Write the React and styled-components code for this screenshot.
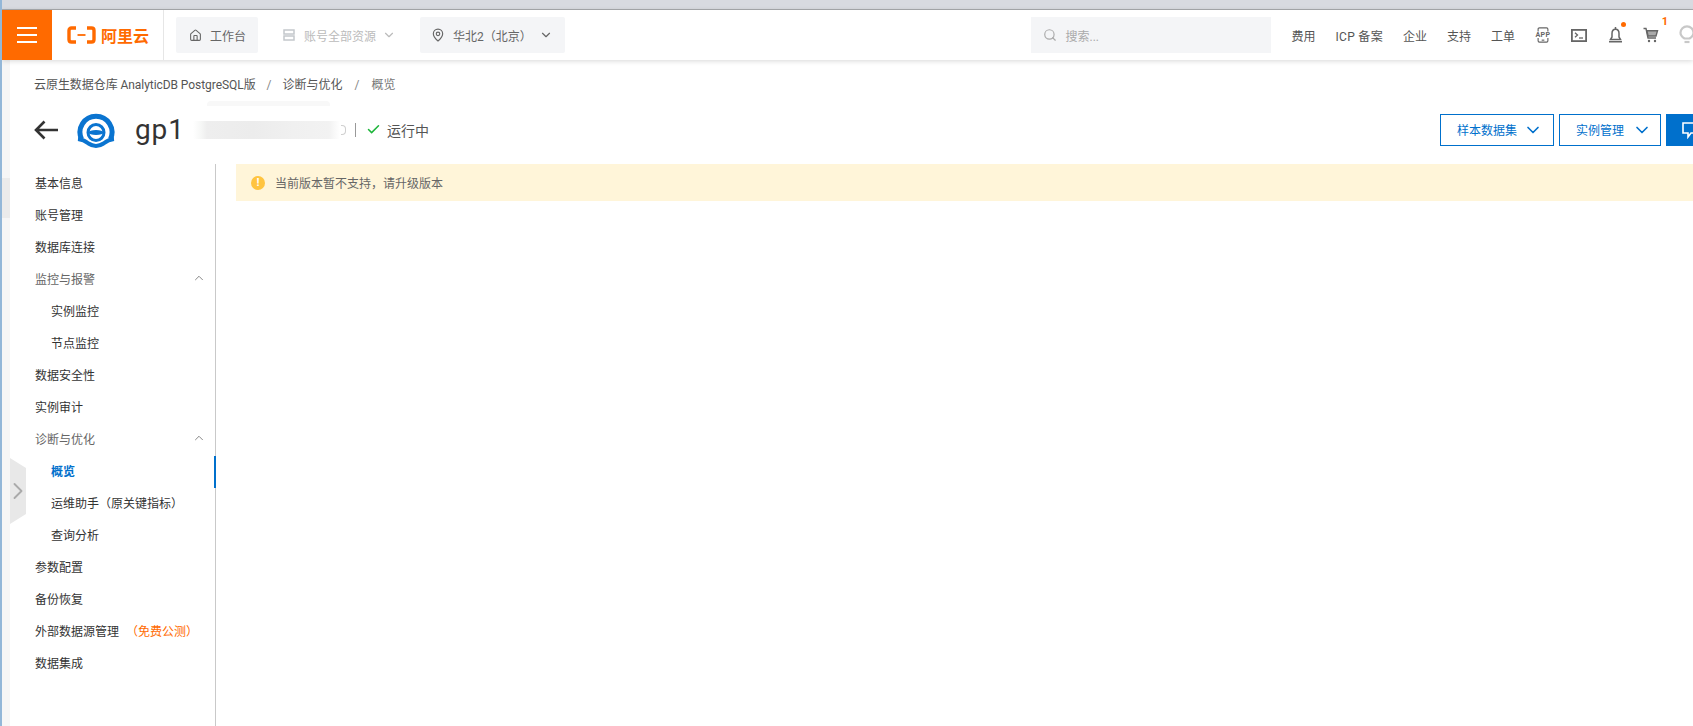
import React from "react";
import styled, { createGlobalStyle } from "styled-components";
import { ChevronDown, ChevronUp, ChevronRight, Home, MapPin, Search, Check } from "lucide-react";

const Global = createGlobalStyle`
  html, body { margin: 0; padding: 0; width: 100%; height: 726px; overflow: hidden; background: #fff; }
  * { box-sizing: border-box; }
  body { font-family: "Roboto", "Noto Sans CJK SC", "Noto Sans", sans-serif; font-size: 12px; color: #333; }
`;

const Page = styled.div`
  width: 1693px; height: 726px; display: flex; flex-direction: column; overflow: hidden; position: relative;
  border-left: 2px solid #93b7d8;
`;
const BrowserStrip = styled.div`
  height: 10px; flex: none; margin-left: -2px; background: #d8dae0; border-bottom: 1px solid #a9abae;
`;
const Header = styled.header`
  height: 50px; flex: none; display: flex; align-items: center; background: #fff;
  box-shadow: 0 1px 5px rgba(0,0,0,.16); position: relative; z-index: 2;
`;
const Burger = styled.div`
  width: 50px; height: 50px; background: #ff6a00; display: flex; flex-direction: column; justify-content: center; align-items: center; gap: 5px;
  span { display: block; width: 20px; height: 2px; background: #fff; }
`;
const Brand = styled.div`
  width: 112px; height: 50px; display: flex; align-items: center; padding-left: 15px; gap: 5px;
  border-right: 1px solid #e6e6e6; color: #ff6a00; font-size: 16px; font-weight: 700;
`;
const NavLeft = styled.div`display: flex; align-items: center; padding-left: 12px;`;
const Pill = styled.div`
  height: 36px; display: flex; align-items: center; border-radius: 2px; color: ${p => (p.$muted ? "#bbb" : "#666")};
  background: ${p => (p.$muted ? "transparent" : "#f4f5f7")};
  width: ${p => p.$w}px; margin-right: ${p => p.$mr || 0}px; padding-left: ${p => p.$pl}px; gap: ${p => p.$gap || 8}px;
`;
const PillChevron = styled.span`display: flex; margin-left: ${p => p.$ml}px;`;
const SearchBox = styled.div`
  width: 240px; height: 36px; margin-left: auto; background: #f4f5f7; display: flex; align-items: center; padding-left: 12px; gap: 9px; color: #aaa;
`;
const TopLinks = styled.div`display: flex; align-items: center; margin-left: 21px; gap: 20px; color: #555;`;
const IcpLink = styled.span`letter-spacing: .3px;`;
const IconStrip = styled.div`display: flex; align-items: center; width: 158px; margin-left: 20px; gap: 20px; flex: none; color: #666;`;
const IconSlot = styled.span`
  position: relative; display: flex; width: 16px; justify-content: center; flex: none;
`;
const Dot = styled.i`position: absolute; top: -5px; right: -3px; width: 5px; height: 5px; border-radius: 50%; background: #ff6a00;`;
const Count = styled.i`position: absolute; top: -11px; right: -9px; font: 700 11px/12px "Roboto", sans-serif; color: #ff6a00;`;

const Main = styled.div`flex: 1; display: flex; flex-direction: column; padding-left: 8px; position: relative; min-height: 0; background: #fff;`;
const Gutter = styled.div`
  position: absolute; left: 0; top: 0; bottom: 0; width: 8px; background: #f6f6f6;
  &::after { content: ""; position: absolute; left: 0; width: 8px; top: 118px; height: 40px; background: #ebebeb; }
`;
const Crumbs = styled.div`
  height: 46px; padding: 15px 0 0 24px; display: flex; align-items: flex-start; color: #555; line-height: 20px;
  span + span::before { content: "/"; margin: 0 11px; color: #888; }
  span:first-child { letter-spacing: -.06px; }
  span:last-child { color: #777; }
  span:last-child::before { margin: 0 12px; }
`;
const TitleRow = styled.div`
  height: 47px; flex: none; display: flex; align-items: center; padding-left: 24px; color: #333;
`;
const BackArrow = styled.svg`flex: none; margin-right: 19px;`;
const Title = styled.h1`margin: 0 0 0 20px; font: 400 28px/36px "Roboto", sans-serif; color: #333; letter-spacing: .9px;`;
const Redacted = styled.div`
  width: 147px; height: 18px; margin-left: 8px; position: relative;
  background: linear-gradient(90deg, #fff 0, #f6f7f6 8px, #eeeeee 14px, #ececec 60px, #f0f0f0 100px, #f2f2f2 136px, #fff 147px);
  &::before { content: ""; position: absolute; left: 14px; top: -20px; width: 123px; height: 5px; background: #f8f8f8; border-radius: 4px 4px 0 0; }
`;
const RedactedTail = styled.span`
  width: 5px; height: 10px; margin-left: 1px; border: 1px solid #cfcfcf; border-left: 0; border-radius: 0 4px 4px 0;
`;
const Divider = styled.span`width: 1px; height: 14px; background: #999; margin-left: 9px;`;
const Status = styled.div`display: flex; align-items: center; margin-left: 10px; gap: 6px; font-size: 14px; color: #555;`;
const Actions = styled.div`margin-left: auto; display: flex; gap: 5px; flex: none; margin-right: -65px;`;
const OutlineBtn = styled.button`
  width: ${p => p.$w}px; height: 32px; border: 1px solid #0070cc; background: #fff; color: #0070cc; padding: 0 0 0 ${p => p.$pl}px;
  display: flex; align-items: center; gap: ${p => p.$gap}px; font: inherit;
`;
const PrimaryBtn = styled.button`
  width: 92px; height: 32px; border: 0; background: #0070cc; color: #fff; padding: 0 0 0 15px; display: flex; align-items: center;
`;
const Body = styled.div`flex: 1; display: flex; min-height: 0; margin-top: 11px;`;
const Side = styled.nav`
  width: 206px; flex: none; border-right: 1px solid #c9c9c9; padding-top: 4px; position: relative;
`;
const MenuItem = styled.div`
  height: 32px; display: flex; align-items: center; position: relative; line-height: 32px;
  padding-left: ${p => (p.$sub ? 41 : 25)}px; padding-right: 9px;
  color: ${p => (p.$active ? "#0070cc" : p.$group ? "#666" : "#333")};
  font-weight: ${p => (p.$active ? 700 : 400)};
  ${p => p.$active && `&::after { content: ""; position: absolute; right: -1px; top: 0; width: 2px; height: 32px; background: #0070cc; }`}
`;
const Caret = styled.span`margin-left: auto; display: flex; color: #777; margin-top: -4px;`;
const Beta = styled.span`color: #ff6a00; margin-left: 7px; margin-right: -7px;`;
const Handle = styled.div`
  position: absolute; left: 8px; top: 398px; width: 16px; height: 66px; background: #e8e8e8;
  clip-path: polygon(0 0, 100% 10px, 100% 56px, 0 100%); display: flex; align-items: center; color: #aaa;
  svg { flex: none; margin-left: -6px; }
`;
const Content = styled.div`flex: 1; padding-left: 20px; min-width: 0;`;
const Alert = styled.div`
  height: 37px; background: #fff5d9; display: flex; align-items: center; padding-left: 15px; gap: 10px; color: #666;
`;
const AlertIcon = styled.span`
  width: 14px; height: 14px; border-radius: 50%; background: #ffc440; color: #fff; font: 700 11px/14px "Roboto", sans-serif; text-align: center; flex: none;
`;

const AliLogo = () => (
  <svg width="29" height="18" viewBox="0 0 29 18" fill="none" stroke="#ff6a00">
    <path d="M9 2H4.500C3 2 2 3 2 4.500v9C2 15 3 16 4.500 16H9" strokeWidth="3.400" />
    <path d="M20 2h4.500C26 2 27 3 27 4.500v9c0 1.500-1 2.500-2.500 2.500H20" strokeWidth="3.400" />
    <path d="M10.500 9h8" strokeWidth="1.800" />
  </svg>
);
const ServerIcon = () => (
  <svg width="12" height="12" viewBox="0 0 12 12" fill="none" stroke="#c4c8cc" strokeWidth="1.500">
    <rect x="1" y="1" width="10" height="4" /><rect x="1" y="7" width="10" height="4" />
  </svg>
);
const AppIcon = () => (
  <svg width="18" height="18" viewBox="0 0 18 18" fill="none">
    <path d="M3.500 5V2.500C3.500 1.600 4.100 1 5 1h8c.9 0 1.500.6 1.500 1.500V5M3.500 12.500v3c0 .9.600 1.500 1.500 1.500h8c.9 0 1.500-.6 1.500-1.500v-3" stroke="#666" strokeWidth="1.300" />
    <path d="M7.500 14.800h3" stroke="#666" strokeWidth="1.300" />
    <text x="9" y="11.800" textAnchor="middle" fontFamily="Roboto" fontWeight="700" fontSize="8" letterSpacing=".4" fill="#666">APP</text>
  </svg>
);
const TerminalIcon = () => (
  <svg width="16" height="13" viewBox="0 0 16 13" fill="none" stroke="#666">
    <rect x=".9" y=".9" width="14.200" height="11.200" strokeWidth="1.800" />
    <path d="M4 3.800 6.500 6 4 8.200" strokeWidth="1.300" /><path d="M8 9h4" strokeWidth="1.300" />
  </svg>
);
const BellIcon = () => (
  <svg width="15" height="16" viewBox="0 0 15 16" fill="none" stroke="#666" strokeWidth="1.500">
    <path d="M7.500 2.200C5 2.200 4 4.200 4 6.500V10l-1.500 2.500h10L11 10V6.500c0-2.300-1-4.300-3.500-4.300Z" />
    <path d="M7.500 0v2M1 14.800h13" />
  </svg>
);
const CartIcon = () => (
  <svg width="16" height="16" viewBox="0 0 16 16" fill="none" stroke="#666">
    <path d="M.5 1.500h2.500L5 11h8" strokeWidth="1.400" />
    <path d="M4 3.800h10.500L13 9H5Z" strokeWidth="1.400" fill="#aaa" />
    <circle cx="6" cy="14" r="1.200" fill="#666" strokeWidth="0" />
    <circle cx="12" cy="14" r="1.200" fill="#666" strokeWidth="0" />
  </svg>
);
const BulbIcon = () => (
  <svg width="16" height="20" viewBox="0 0 16 20" fill="none" stroke="#c8c8c8" strokeWidth="2.200">
    <path d="M5.500 13.500C3 12 1.500 10.200 1.500 7.800a6.500 6.500 0 0 1 13 0c0 2.400-1.500 4.200-4 5.700Z" />
    <path d="M5.500 17h5" />
  </svg>
);
const GpLogo = () => (
  <svg width="38" height="38" viewBox="9 5 37 38" fill="none" stroke="#0a74d0">
    <path d="M13 33A16 16 0 1 1 42 33" strokeWidth="5" />
    <path d="M9.500 33Q15 33.500 20 37.500Q27.500 42.500 35 37.500Q40 33.500 45.500 33" strokeWidth="4" />
    <circle cx="27.500" cy="26.500" r="8" strokeWidth="3" />
    <ellipse cx="27.500" cy="26.500" rx="7.500" ry="2.500" fill="#0a74d0" strokeWidth="0" />
  </svg>
);
const ChatIcon = () => (
  <svg width="18" height="18" viewBox="0 0 18 18" fill="none" stroke="#fff" strokeWidth="1.600">
    <path d="M2 2h14v10H10l-3 4v-4H2Z" />
  </svg>
);

const menu = [
  { t: "基本信息" }, { t: "账号管理" }, { t: "数据库连接" },
  { t: "监控与报警", group: true }, { t: "实例监控", sub: true }, { t: "节点监控", sub: true },
  { t: "数据安全性" }, { t: "实例审计" },
  { t: "诊断与优化", group: true }, { t: "概览", sub: true, active: true },
  { t: "运维助手（原关键指标）", sub: true }, { t: "查询分析", sub: true },
  { t: "参数配置" }, { t: "备份恢复" }, { t: "外部数据源管理", beta: "（免费公测）" }, { t: "数据集成" },
];

export default function App() {
  return (
    <Page>
      <Global />
      <BrowserStrip />
      <Header>
        <Burger><span /><span /><span /></Burger>
        <Brand><AliLogo />阿里云</Brand>
        <NavLeft>
          <Pill $w={82} $pl={13} $mr={11}><Home size={13} />工作台</Pill>
          <Pill $w={151} $pl={14} $muted $gap={9}><ServerIcon />账号全部资源<PillChevron $ml={-3}><ChevronDown size={14} /></PillChevron></Pill>
          <Pill $w={145} $pl={11}><MapPin size={14} />华北2（北京）<PillChevron $ml={-1}><ChevronDown size={14} /></PillChevron></Pill>
        </NavLeft>
        <SearchBox><Search size={14} />搜索...</SearchBox>
        <TopLinks>
          <span>费用</span><IcpLink>ICP 备案</IcpLink><span>企业</span><span>支持</span><span>工单</span>
        </TopLinks>
        <IconStrip>
          <IconSlot><AppIcon /></IconSlot>
          <IconSlot><TerminalIcon /></IconSlot>
          <IconSlot><BellIcon /><Dot /></IconSlot>
          <IconSlot><CartIcon /><Count>1</Count></IconSlot>
          <IconSlot><BulbIcon /></IconSlot>
        </IconStrip>
      </Header>
      <Main>
        <Gutter />
        <Crumbs>
          <span>云原生数据仓库 AnalyticDB PostgreSQL版</span><span>诊断与优化</span><span>概览</span>
        </Crumbs>
        <TitleRow>
          <BackArrow width="24" height="20" viewBox="0 0 24 20" fill="none" stroke="#333" strokeWidth="2.600">
            <path d="M24 10H2M10.500 1.500 2 10l8.500 8.500" />
          </BackArrow>
          <GpLogo />
          <Title>gp1</Title>
          <Redacted />
          <RedactedTail />
          <Divider />
          <Status><Check size={15} color="#1db53a" strokeWidth={2.400} />运行中</Status>
          <Actions>
            <OutlineBtn $w={114} $pl={16} $gap={6}>样本数据集<ChevronDown size={20} /></OutlineBtn>
            <OutlineBtn $w={102} $pl={16} $gap={8}>实例管理<ChevronDown size={20} /></OutlineBtn>
            <PrimaryBtn><ChatIcon /></PrimaryBtn>
          </Actions>
        </TitleRow>
        <Body>
          <Side>
            {menu.map((m) => (
              <MenuItem key={m.t} $sub={m.sub} $group={m.group} $active={m.active}>
                {m.t}
                {m.beta && <Beta>{m.beta}</Beta>}
                {m.group && <Caret><ChevronUp size={14} strokeWidth={1.500} /></Caret>}
              </MenuItem>
            ))}
          </Side>
          <Content>
            <Alert><AlertIcon>!</AlertIcon>当前版本暂不支持，请升级版本</Alert>
          </Content>
        </Body>
        <Handle><ChevronRight size={28} strokeWidth={1.600} /></Handle>
      </Main>
    </Page>
  );
}
